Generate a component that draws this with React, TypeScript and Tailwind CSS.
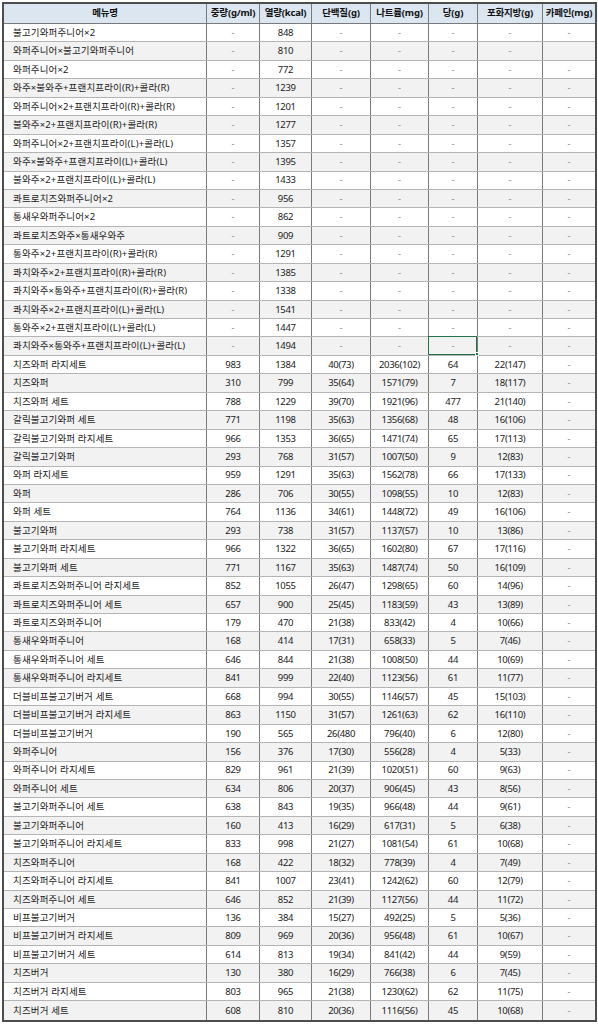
import React from "react";

const headers = ["메뉴명", "중량(g/ml)", "열량(kcal)", "단백질(g)", "나트륨(mg)", "당(g)", "포화지방(g)", "카페인(mg)"];

const combos: [string, string][] = [
  ["불고기와퍼주니어×2", "848"],
  ["와퍼주니어×불고기와퍼주니어", "810"],
  ["와퍼주니어×2", "772"],
  ["와주×불와주+프랜치프라이(R)+콜라(R)", "1239"],
  ["와퍼주니어×2+프랜치프라이(R)+콜라(R)", "1201"],
  ["불와주×2+프랜치프라이(R)+콜라(R)", "1277"],
  ["와퍼주니어×2+프랜치프라이(L)+콜라(L)", "1357"],
  ["와주×불와주+프랜치프라이(L)+콜라(L)", "1395"],
  ["불와주×2+프랜치프라이(L)+콜라(L)", "1433"],
  ["콰트로치즈와퍼주니어×2", "956"],
  ["통새우와퍼주니어×2", "862"],
  ["콰트로치즈와주×통새우와주", "909"],
  ["통와주×2+프랜치프라이(R)+콜라(R)", "1291"],
  ["콰치와주×2+프랜치프라이(R)+콜라(R)", "1385"],
  ["콰치와주×통와주+프랜치프라이(R)+콜라(R)", "1338"],
  ["콰치와주×2+프랜치프라이(L)+콜라(L)", "1541"],
  ["통와주×2+프랜치프라이(L)+콜라(L)", "1447"],
  ["콰치와주×통와주+프랜치프라이(L)+콜라(L)", "1494"],
];

const data: string[][] = [
  ["치즈와퍼 라지세트", "983", "1384", "40(73)", "2036(102)", "64", "22(147)", "-"],
  ["치즈와퍼", "310", "799", "35(64)", "1571(79)", "7", "18(117)", "-"],
  ["치즈와퍼 세트", "788", "1229", "39(70)", "1921(96)", "477", "21(140)", "-"],
  ["갈릭불고기와퍼 세트", "771", "1198", "35(63)", "1356(68)", "48", "16(106)", "-"],
  ["갈릭불고기와퍼 라지세트", "966", "1353", "36(65)", "1471(74)", "65", "17(113)", "-"],
  ["갈릭불고기와퍼", "293", "768", "31(57)", "1007(50)", "9", "12(83)", "-"],
  ["와퍼 라지세트", "959", "1291", "35(63)", "1562(78)", "66", "17(133)", "-"],
  ["와퍼", "286", "706", "30(55)", "1098(55)", "10", "12(83)", "-"],
  ["와퍼 세트", "764", "1136", "34(61)", "1448(72)", "49", "16(106)", "-"],
  ["불고기와퍼", "293", "738", "31(57)", "1137(57)", "10", "13(86)", "-"],
  ["불고기와퍼 라지세트", "966", "1322", "36(65)", "1602(80)", "67", "17(116)", "-"],
  ["불고기와퍼 세트", "771", "1167", "35(63)", "1487(74)", "50", "16(109)", "-"],
  ["콰트로치즈와퍼주니어 라지세트", "852", "1055", "26(47)", "1298(65)", "60", "14(96)", "-"],
  ["콰트로치즈와퍼주니어 세트", "657", "900", "25(45)", "1183(59)", "43", "13(89)", "-"],
  ["콰트로치즈와퍼주니어", "179", "470", "21(38)", "833(42)", "4", "10(66)", "-"],
  ["통새우와퍼주니어", "168", "414", "17(31)", "658(33)", "5", "7(46)", "-"],
  ["통새우와퍼주니어 세트", "646", "844", "21(38)", "1008(50)", "44", "10(69)", "-"],
  ["통새우와퍼주니어 라지세트", "841", "999", "22(40)", "1123(56)", "61", "11(77)", "-"],
  ["더블비프불고기버거 세트", "668", "994", "30(55)", "1146(57)", "45", "15(103)", "-"],
  ["더블비프불고기버거 라지세트", "863", "1150", "31(57)", "1261(63)", "62", "16(110)", "-"],
  ["더블비프불고기버거", "190", "565", "26(480", "796(40)", "6", "12(80)", "-"],
  ["와퍼주니어", "156", "376", "17(30)", "556(28)", "4", "5(33)", "-"],
  ["와퍼주니어 라지세트", "829", "961", "21(39)", "1020(51)", "60", "9(63)", "-"],
  ["와퍼주니어 세트", "634", "806", "20(37)", "906(45)", "43", "8(56)", "-"],
  ["불고기와퍼주니어 세트", "638", "843", "19(35)", "966(48)", "44", "9(61)", "-"],
  ["불고기와퍼주니어", "160", "413", "16(29)", "617(31)", "5", "6(38)", "-"],
  ["불고기와퍼주니어 라지세트", "833", "998", "21(27)", "1081(54)", "61", "10(68)", "-"],
  ["치즈와퍼주니어", "168", "422", "18(32)", "778(39)", "4", "7(49)", "-"],
  ["치즈와퍼주니어 라지세트", "841", "1007", "23(41)", "1242(62)", "60", "12(79)", "-"],
  ["치즈와퍼주니어 세트", "646", "852", "21(39)", "1127(56)", "44", "11(72)", "-"],
  ["비프불고기버거", "136", "384", "15(27)", "492(25)", "5", "5(36)", "-"],
  ["비프불고기버거 라지세트", "809", "969", "20(36)", "956(48)", "61", "10(67)", "-"],
  ["비프불고기버거 세트", "614", "813", "19(34)", "841(42)", "44", "9(59)", "-"],
  ["치즈버거", "130", "380", "16(29)", "766(38)", "6", "7(45)", "-"],
  ["치즈버거 라지세트", "803", "965", "21(38)", "1230(62)", "62", "11(75)", "-"],
  ["치즈버거 세트", "608", "810", "20(36)", "1116(56)", "45", "10(68)", "-"],
];

const rows: string[][] = [
  ...combos.map(([name, kcal], i) => [name, "-", kcal, "-", "-", "-", "-", i === 1 ? "" : "-"]),
  ...data,
];

const gridCols = "grid grid-cols-[203px_53px_52px_59px_58px_49px_65px_52px]";
const font = { fontFamily: '"Noto Sans", "Noto Sans CJK KR", sans-serif' };

export default function App() {
  return (
    <div className="w-[598px] h-[1024px] bg-white pt-[2px] pl-[2px]" style={font}>
      <div className="w-[595px] border-2 border-[#4d4d4d] bg-white">
        <div className={`${gridCols} h-[20px] bg-[#dce6f1] border-b border-[#7a7a7a]`}>
          {headers.map((h, i) => (
            <div
              key={h}
              className={`flex items-center justify-center text-[9.5px] font-bold tracking-[-0.2px] text-[#111] ${i < 7 ? "border-r border-[#7a7a7a]" : ""}`}
            >
              {h}
            </div>
          ))}
        </div>
        {rows.map((r, ri) => (
          <div
            key={ri}
            className={`${gridCols} h-[18.45px] border-b border-[#b4b4b4] ${ri % 2 === 1 ? "bg-[#f2f2f2]" : "bg-white"} ${ri === rows.length - 1 ? "border-b-0" : ""}`}
          >
            {r.map((c, ci) => (
              <div
                key={ci}
                className={`relative flex items-center leading-none ${ci === 0 ? "justify-start pl-[9px] text-[9.5px] tracking-[0.15px]" : "justify-center text-[9.5px] tracking-[-0.3px]"} ${ci < 7 ? "border-r border-[#7a7a7a]" : ""} ${c === "-" ? "text-[#8a8a8a]" : "text-[#1a1a1a]"}`}
              >
                {c}
                {ri === 17 && ci === 5 && (
                  <div className="absolute -left-[1px] -top-[1px] right-0 bottom-0 border-[1.5px] border-[#217346]">
                    <div className="absolute -right-[2.5px] -bottom-[2.5px] w-[4px] h-[4px] bg-[#217346] border border-white" />
                  </div>
                )}
              </div>
            ))}
          </div>
        ))}
      </div>
    </div>
  );
}
